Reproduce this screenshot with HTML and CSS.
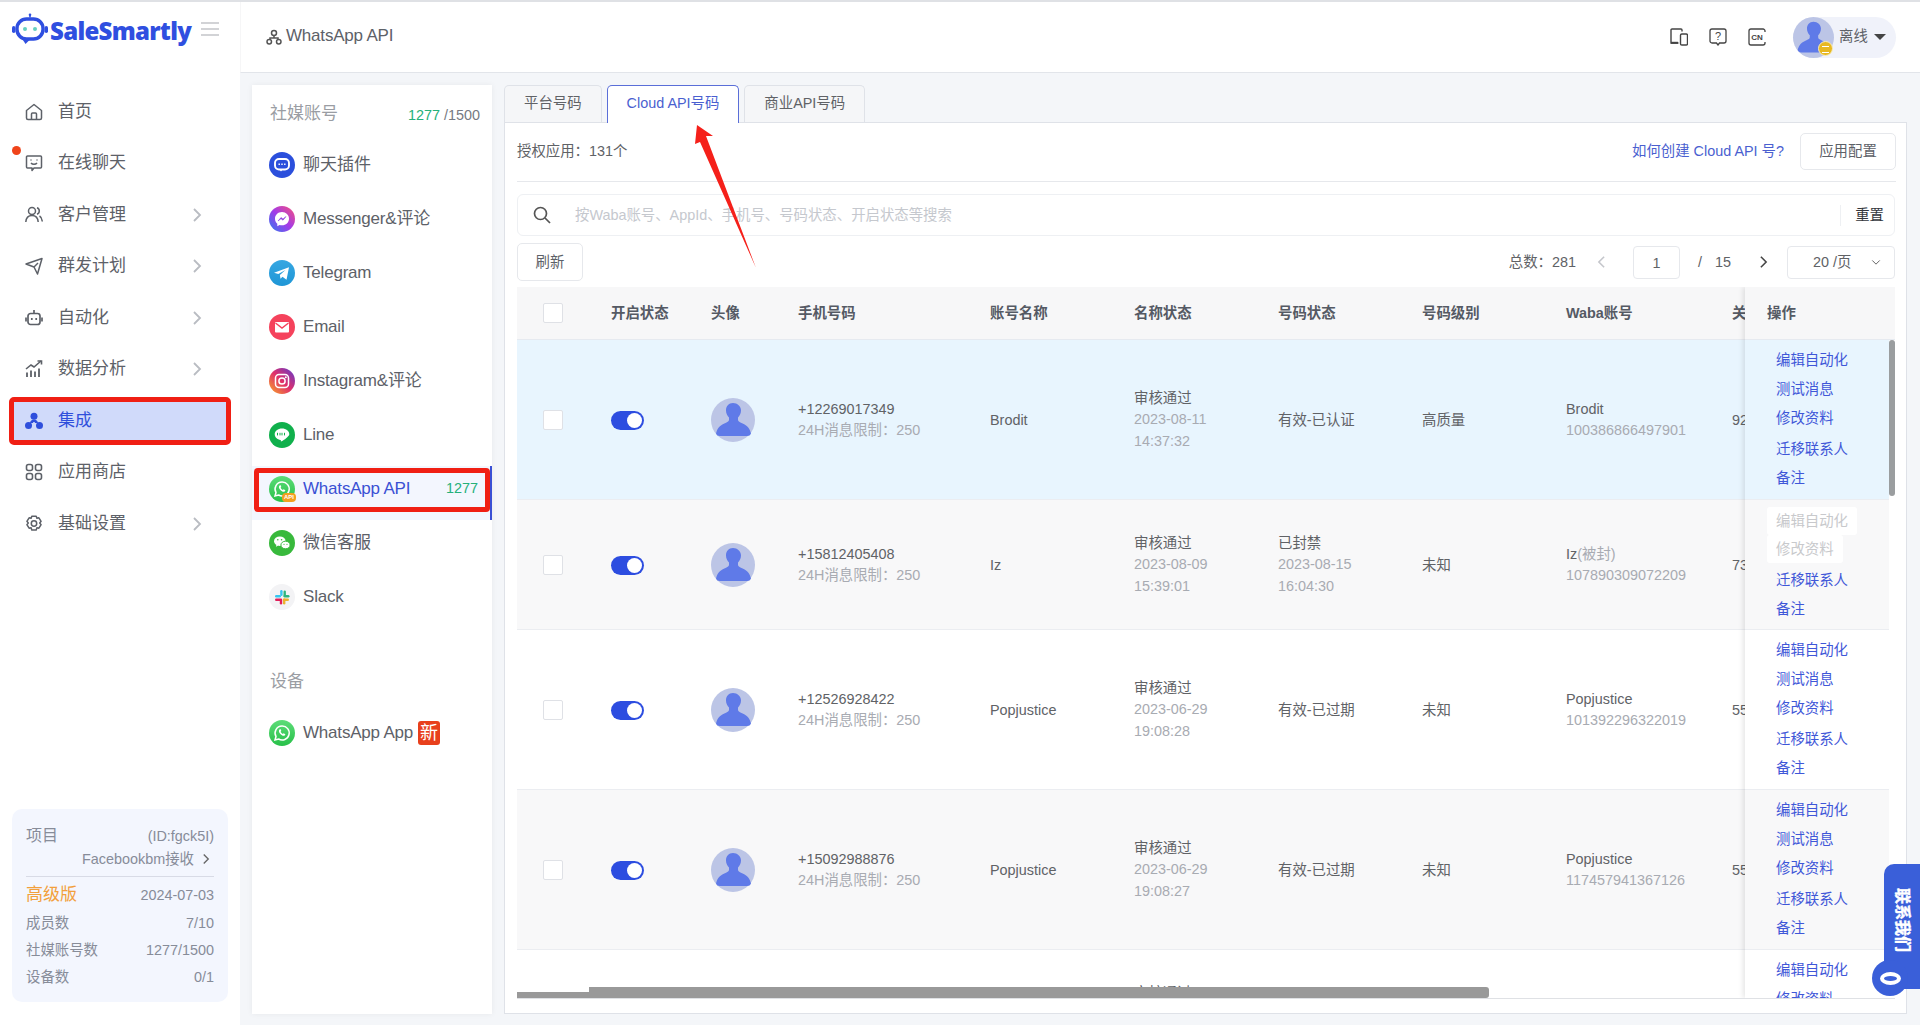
FILE: index.html
```html
<!DOCTYPE html>
<html lang="zh-CN">
<head>
<meta charset="utf-8">
<title>SaleSmartly - WhatsApp API</title>
<link rel="stylesheet" href="styles.css">
</head>
<body>
<svg class="sprite" aria-hidden="true">
  <defs>
    <symbol id="user" viewBox="0 0 44 44">
      <circle cx="22" cy="22" r="22" fill="#bcc5e6"/>
      <path d="M22 5c-4.400 0-7 3.300-7 7.300 0 3 1.200 5.500 3 7.200v2.300c0 1.500-1.300 2.300-3.500 3.200C10 26.800 6.600 29 5 35.500c.6 1.700 2 2.500 3.800 2.500h27.400c1.800 0 3.200-.8 3.800-2.500-1.600-6.500-5-8.700-9.500-10.500-2.200-.9-3.500-1.700-3.500-3.200v-2.300c1.800-1.700 3-4.200 3-7.200C30 8.300 26.400 5 22 5z" fill="#5f7ae8"/>
    </symbol>
    <symbol id="chev" viewBox="0 0 10 16"><path d="M2 2l6 6-6 6" fill="none" stroke="currentColor" stroke-width="1.800"/></symbol>
    <symbol id="wa" viewBox="0 0 26 26">
      <circle cx="13" cy="13" r="13" fill="url(#waGrad)"/>
      <path d="M13 6a7 7 0 0 0-6 10.500L6 20l3.600-1A7 7 0 1 0 13 6z" fill="none" stroke="#fff" stroke-width="1.500"/>
      <path d="M10.500 9.500c-1 1-.7 2.800.9 4.500s3.400 2.300 4.500 1.200l.5-1-1.800-1-.8.700c-.8-.3-1.900-1.400-2.200-2.300l.7-.7-.8-1.900z" fill="#fff"/>
    </symbol>
    <linearGradient id="waGrad" x1="0" y1="0" x2="0" y2="1"><stop offset="0" stop-color="#5cdc78"/><stop offset="1" stop-color="#28c049"/></linearGradient>
    <linearGradient id="msGrad" x1="0" y1="1" x2="1" y2="0"><stop offset="0" stop-color="#2f7bf0"/><stop offset=".5" stop-color="#a33be8"/><stop offset="1" stop-color="#f9507a"/></linearGradient>
    <linearGradient id="igGrad" x1="0" y1="1" x2="1" y2="0"><stop offset="0" stop-color="#f9a825"/><stop offset=".5" stop-color="#e0306b"/><stop offset="1" stop-color="#5b3bd0"/></linearGradient>
    <linearGradient id="tgGrad" x1="0" y1="0" x2="0" y2="1"><stop offset="0" stop-color="#36a7e2"/><stop offset="1" stop-color="#1f96d6"/></linearGradient>
  </defs>
</svg>

<div class="app">
  <aside class="side">
    <div class="brand">
      <svg class="brand-mark" viewBox="0 0 36 32" fill="none">
        <path d="M18 1.500v3" stroke="#2f4fe0" stroke-width="1.600"/>
        <circle cx="18" cy="1.800" r="1.300" fill="#2f4fe0"/>
        <rect x="5" y="6" width="26" height="20" rx="9.500" stroke="#2f4fe0" stroke-width="3.400" fill="#fff"/>
        <path d="M10 25.500l3.500 5.500 4-4z" fill="#2f4fe0"/>
        <rect x="0" y="13" width="3.400" height="7" rx="1.700" fill="#2f4fe0"/>
        <rect x="32.600" y="13" width="3.400" height="7" rx="1.700" fill="#2f4fe0"/>
        <circle cx="13" cy="16" r="2" fill="#66d0c0"/>
        <circle cx="23" cy="16" r="2" fill="#66d0c0"/>
      </svg>
      <span class="brand-name">SaleSmartly</span>
      <span class="burger"><i></i><i></i><i></i></span>
    </div>
    <nav class="nav">
      <a class="nav-item">
        <svg class="nav-ic" viewBox="0 0 18 18" fill="none" stroke="currentColor" stroke-width="1.500"><path d="M1.500 7.500L9 1.500l7.500 6V15a1.500 1.500 0 0 1-1.500 1.500H3A1.500 1.500 0 0 1 1.500 15z" stroke-linejoin="round"/><path d="M6.500 16.500V11a1 1 0 0 1 1-1h3a1 1 0 0 1 1 1v5.500"/></svg>
        <span>首页</span>
      </a>
      <a class="nav-item">
        <i class="dot"></i>
        <svg class="nav-ic" viewBox="0 0 18 18" fill="none" stroke="currentColor" stroke-width="1.500"><path d="M2.500 2h13a1 1 0 0 1 1 1v10a1 1 0 0 1-1 1H9l-2 2.500V14H2.500a1 1 0 0 1-1-1V3a1 1 0 0 1 1-1z" stroke-linejoin="round"/><path d="M6 9c1.500 1.800 4.500 1.800 6 0"/><path d="M6 5.500v1M12 5.500v1"/></svg>
        <span>在线聊天</span>
      </a>
      <a class="nav-item">
        <svg class="nav-ic" viewBox="0 0 18 18" fill="none" stroke="currentColor" stroke-width="1.500"><circle cx="7" cy="5" r="3.500"/><path d="M.8 16c.3-4 2.800-6.500 6.200-6.500s5.900 2.500 6.200 6.500"/><path d="M12 1.800c1.500.5 2.300 1.700 2.300 3.200s-.8 2.700-2.300 3.200M14.500 10c1.700 1 2.600 3 2.800 5.500"/></svg>
        <span>客户管理</span>
        <svg class="chev"><use href="#chev"/></svg>
      </a>
      <a class="nav-item">
        <svg class="nav-ic" viewBox="0 0 18 18" fill="none" stroke="currentColor" stroke-width="1.500" stroke-linejoin="round"><path d="M1 7l16-5.500L12.500 17 9 10z"/><path d="M9 10l4-4"/></svg>
        <span>群发计划</span>
        <svg class="chev"><use href="#chev"/></svg>
      </a>
      <a class="nav-item">
        <svg class="nav-ic" viewBox="0 0 18 18" fill="none" stroke="currentColor" stroke-width="1.700"><rect x="3" y="4.500" width="12" height="11" rx="2.500"/><path d="M9 1v3.500M1 8.500v4M17 8.500v4"/><path d="M6.800 9v2M11.200 9v2"/></svg>
        <span>自动化</span>
        <svg class="chev"><use href="#chev"/></svg>
      </a>
      <a class="nav-item">
        <svg class="nav-ic" viewBox="0 0 18 18" fill="none" stroke="currentColor" stroke-width="1.600"><path d="M1 9l5-4 3 2 7-6"/><path d="M12.500 1H16.500V4.500"/><path d="M2 12.500V17M6 10.500V17M10 11.500V17M14 8.500V17" stroke-width="1.800"/></svg>
        <span>数据分析</span>
        <svg class="chev"><use href="#chev"/></svg>
      </a>
      <a class="nav-item active">
        <svg class="nav-ic" viewBox="0 0 18 18" fill="currentColor"><circle cx="9" cy="4.200" r="3.500"/><circle cx="3.500" cy="13.500" r="3.500"/><circle cx="14.500" cy="13.500" r="3.500"/><path d="M5 11c.3-2 1.800-3.500 4-3.500s3.700 1.500 4 3.500H9.800v-1H8.200v1z"/></svg>
        <span>集成</span>
      </a>
      <a class="nav-item">
        <svg class="nav-ic" viewBox="0 0 18 18" fill="none" stroke="currentColor" stroke-width="1.600"><rect x="1.500" y="1.500" width="6" height="6" rx="2"/><rect x="10.500" y="1.500" width="6" height="6" rx="2"/><rect x="1.500" y="10.500" width="6" height="6" rx="2"/><rect x="10.500" y="10.500" width="6" height="6" rx="2"/></svg>
        <span>应用商店</span>
      </a>
      <a class="nav-item">
        <svg class="nav-ic" viewBox="0 0 18 18" fill="none" stroke="currentColor" stroke-width="1.500" stroke-linejoin="round"><path d="M6.800 1.300h4.400l.7 2 2-.5 2.200 3.500-1.400 1.700 1.400 1.700-2.200 3.500-2-.4-.7 2.100H6.800l-.7-2.100-2 .4L1.900 9.700l1.400-1.700-1.400-1.700 2.200-3.500 2 .5z"/><circle cx="9" cy="8.500" r="2.700"/></svg>
        <span>基础设置</span>
        <svg class="chev"><use href="#chev"/></svg>
      </a>
    </nav>
    <section class="plan">
      <div class="plan-row"><span class="plan-project">项目</span><span>(ID:fgck5I)</span></div>
      <div class="plan-team">Facebookbm接收<svg class="plan-chev"><use href="#chev"/></svg></div>
      <hr class="plan-rule">
      <div class="plan-row plan-tier"><span class="plan-level">高级版</span><span>2024-07-03</span></div>
      <div class="plan-row plan-stat"><span>成员数</span><span>7/10</span></div>
      <div class="plan-row plan-stat"><span>社媒账号数</span><span>1277/1500</span></div>
      <div class="plan-row plan-stat"><span>设备数</span><span>0/1</span></div>
    </section>
  </aside>

  <div class="right">
    <header class="topbar">
      <svg class="crumb-ic" viewBox="0 0 16 16" fill="none" stroke="#555" stroke-width="1.500"><circle cx="8" cy="4" r="2.500"/><rect x="1" y="10.500" width="4.500" height="4.500" rx="2.200"/><rect x="10.500" y="10.500" width="4.500" height="4.500" rx="2.200"/><path d="M4 10.500V9h8v1.500M8 6.500V9"/></svg>
      <span class="crumb lat">WhatsApp API</span>
      <div class="top-tools">
        <svg class="tool" viewBox="0 0 18 18" fill="none" stroke="#444" stroke-width="1.400"><path d="M12 3.500V2a1 1 0 0 0-1-1H2a1 1 0 0 0-1 1v13h7.500"/><rect x="10.500" y="6" width="7" height="11" rx="1.300"/><path d="M1 14.800h7" stroke-width="2"/></svg>
        <svg class="tool" viewBox="0 0 18 18" fill="none" stroke="#444" stroke-width="1.300"><path d="M3 1h12a2 2 0 0 1 2 2v10a2 2 0 0 1-2 2h-4.500L9 17l-1.500-2H3a2 2 0 0 1-2-2V3a2 2 0 0 1 2-2z"/><text x="9" y="12" text-anchor="middle" class="tool-q">?</text></svg>
        <svg class="tool" viewBox="0 0 18 18" fill="none" stroke="#444" stroke-width="1.300"><path d="M17 4V3a2 2 0 0 0-2-2H3a2 2 0 0 0-2 2v12a2 2 0 0 0 2 2h12a2 2 0 0 0 2-2v-1"/><text x="9" y="12" text-anchor="middle" class="tool-cn">CN</text></svg>
        <div class="status">
          <span class="status-face">
            <svg class="status-ava"><use href="#user"/></svg>
            <i class="status-badge"></i>
          </span>
          <span class="status-text">离线</span>
          <i class="caret"></i>
        </div>
      </div>
    </header>

    <div class="content">
      <aside class="social">
        <div class="soc-head"><span>社媒账号</span><span class="soc-count"><b>1277</b> /1500</span></div>
        <a class="soc-item">
          <svg class="soc-ic" viewBox="0 0 26 26"><circle cx="13" cy="13" r="13" fill="#2b4fdc"/><rect x="6" y="7" width="14" height="10.500" rx="4" fill="none" stroke="#fff" stroke-width="1.900"/><path d="M10 17l2 2.500L14 17z" fill="#fff"/><path d="M9.500 12.300h1.400M12.300 12.300h1.400M15.100 12.300h1.400" stroke="#fff" stroke-width="1.600"/></svg>
          <span>聊天插件</span>
        </a>
        <a class="soc-item">
          <svg class="soc-ic" viewBox="0 0 26 26"><circle cx="13" cy="13" r="13" fill="url(#msGrad)"/><path d="M13 6c-4 0-7 2.900-7 6.700 0 2 .8 3.800 2.300 5v2.500l2.300-1.200c.8.200 1.600.3 2.400.3 4 0 7-2.900 7-6.600S17 6 13 6z" fill="#fff"/><path d="M9 15l3-3.500 2 1.500 3-2.500-3 3.700-2-1.500z" fill="#8a3ae0" stroke="#8a3ae0" stroke-width=".5"/></svg>
          <span class="lat">Messenger&amp;评论</span>
        </a>
        <a class="soc-item">
          <svg class="soc-ic" viewBox="0 0 26 26"><circle cx="13" cy="13" r="13" fill="url(#tgGrad)"/><path d="M5 12.800l15-5.600-2.500 12.500-4-3-2 2-.6-3.800 5.600-5-7.200 4.200z" fill="#fff"/></svg>
          <span class="lat">Telegram</span>
        </a>
        <a class="soc-item">
          <svg class="soc-ic" viewBox="0 0 26 26"><circle cx="13" cy="13" r="13" fill="#f5425c"/><rect x="6" y="8" width="14" height="10.500" rx="1" fill="#fff"/><path d="M6.500 9l6.500 5 6.500-5" fill="none" stroke="#f5425c" stroke-width="1.400"/></svg>
          <span class="lat">Email</span>
        </a>
        <a class="soc-item">
          <svg class="soc-ic" viewBox="0 0 26 26"><circle cx="13" cy="13" r="13" fill="url(#igGrad)"/><rect x="6.500" y="6.500" width="13" height="13" rx="3.500" fill="none" stroke="#fff" stroke-width="1.500"/><circle cx="13" cy="13" r="3.100" fill="none" stroke="#fff" stroke-width="1.500"/><circle cx="16.800" cy="9.200" r="1" fill="#fff"/></svg>
          <span class="lat">Instagram&amp;评论</span>
        </a>
        <a class="soc-item">
          <svg class="soc-ic" viewBox="0 0 26 26"><circle cx="13" cy="13" r="13" fill="#10b04c"/><path d="M13 6.500c-4.100 0-7.300 2.500-7.300 5.800 0 2.900 2.500 5.200 5.900 5.700.4.100.3 1.500.3 1.500s3.700-1.700 6.100-4.100c1.400-1.300 2.300-2 2.300-3.100 0-3.300-3.200-5.800-7.300-5.800z" fill="#fff"/><path d="M8.500 10.800v2.600M11 10.800v2.600M13 10.800v2.600M15.500 10.800v2.600" stroke="#10b04c" stroke-width="1"/></svg>
          <span class="lat">Line</span>
        </a>
        <a class="soc-item soc-active">
          <span class="soc-wrap">
            <svg class="soc-ic"><use href="#wa"/></svg>
            <i class="api-tag">API</i>
          </span>
          <span class="lat">WhatsApp API</span>
          <b class="soc-num">1277</b>
          <i class="red-box"></i>
        </a>
        <a class="soc-item">
          <svg class="soc-ic" viewBox="0 0 26 26"><circle cx="13" cy="13" r="13" fill="#38b93c"/><ellipse cx="10.800" cy="11.200" rx="5.800" ry="4.800" fill="#fff"/><path d="M7.500 14.500l-.6 2.200 2.500-1.300z" fill="#fff"/><ellipse cx="16.500" cy="15" rx="4.600" ry="3.800" fill="#fff" stroke="#38b93c"/><circle cx="8.800" cy="9.800" r=".8" fill="#38b93c"/><circle cx="12.600" cy="9.800" r=".8" fill="#38b93c"/><circle cx="15" cy="14.300" r=".6" fill="#38b93c"/><circle cx="18" cy="14.300" r=".6" fill="#38b93c"/></svg>
          <span>微信客服</span>
        </a>
        <a class="soc-item">
          <svg class="soc-ic" viewBox="0 0 26 26"><circle cx="13" cy="13" r="13" fill="#f3f3f5"/><rect x="11.200" y="6" width="2.400" height="6" rx="1.200" fill="#36c5f0"/><rect x="6" y="11" width="6" height="2.400" rx="1.200" fill="#36c5f0"/><rect x="14.500" y="6.500" width="2.400" height="6" rx="1.200" fill="#2eb67d"/><rect x="14.500" y="11" width="6" height="2.400" rx="1.200" fill="#2eb67d"/><rect x="14" y="14.500" width="6" height="2.400" rx="1.200" fill="#ecb22e"/><rect x="14" y="14.500" width="2.400" height="6" rx="1.200" fill="#ecb22e"/><rect x="6" y="14.500" width="6" height="2.400" rx="1.200" fill="#e01e5a"/><rect x="10.800" y="14.500" width="2.400" height="6" rx="1.200" fill="#e01e5a"/></svg>
          <span class="lat">Slack</span>
        </a>
        <div class="soc-head soc-head-2"><span>设备</span></div>
        <a class="soc-item">
          <svg class="soc-ic"><use href="#wa"/></svg>
          <span class="lat">WhatsApp App</span>
          <i class="new-tag">新</i>
        </a>
      </aside>

      <main class="main">
        <div class="tabs">
          <a class="tab">平台号码</a>
          <a class="tab tab-on">Cloud API号码</a>
          <a class="tab">商业API号码</a>
        </div>
        <div class="panel">
          <div class="panel-top">
            <span>授权应用：131个</span>
            <a class="how">如何创建 Cloud API 号?</a>
            <button class="btn btn-cfg">应用配置</button>
          </div>
          <div class="search">
            <svg class="search-ic" viewBox="0 0 18 18" fill="none" stroke="#555" stroke-width="1.700"><circle cx="7.500" cy="7.500" r="6"/><path d="M12 12l5 5"/></svg>
            <span class="search-ph">按Waba账号、AppId、手机号、号码状态、开启状态等搜索</span>
            <span class="reset">重置</span>
          </div>
          <div class="toolbar">
            <button class="btn btn-ref">刷新</button>
            <div class="pager">
              <span>总数：281</span>
              <svg class="pg-prev"><use href="#chev"/></svg>
              <span class="pg-input">1</span>
              <span class="pg-sep">/</span>
              <span class="pg-total">15</span>
              <svg class="pg-next"><use href="#chev"/></svg>
              <span class="pg-size">20 /页<svg class="pg-down" viewBox="0 0 12 8"><path d="M1.500 1.500L6 6l4.500-4.500" fill="none" stroke="#666" stroke-width="1.200"/></svg></span>
            </div>
          </div>

          <div class="table">
            <div class="row head">
              <div class="c-check"><i class="check"></i></div>
              <div>开启状态</div><div>头像</div><div>手机号码</div><div>账号名称</div><div>名称状态</div><div>号码状态</div><div>号码级别</div><div>Waba账号</div><div>关联</div>
            </div>
            <div class="tbody">
              <div class="row r-tall r-sel">
                <div class="c-check"><i class="check"></i></div>
                <div><i class="switch"></i></div>
                <div><svg class="ava"><use href="#user"/></svg></div>
                <div><p>+12269017349</p><p class="sub">24H消息限制：250</p></div>
                <div>Brodit</div>
                <div><p>审核通过</p><p class="sub">2023-08-11</p><p class="sub">14:37:32</p></div>
                <div>有效-已认证</div>
                <div>高质量</div>
                <div><p>Brodit</p><p class="sub">100386866497901</p></div>
                <div>92</div>
              </div>
              <div class="row r-short r-alt">
                <div class="c-check"><i class="check"></i></div>
                <div><i class="switch"></i></div>
                <div><svg class="ava"><use href="#user"/></svg></div>
                <div><p>+15812405408</p><p class="sub">24H消息限制：250</p></div>
                <div>Iz</div>
                <div><p>审核通过</p><p class="sub">2023-08-09</p><p class="sub">15:39:01</p></div>
                <div><p>已封禁</p><p class="sub">2023-08-15</p><p class="sub">16:04:30</p></div>
                <div>未知</div>
                <div><p>Iz<span class="sub">(被封)</span></p><p class="sub">107890309072209</p></div>
                <div>73</div>
              </div>
              <div class="row r-tall">
                <div class="c-check"><i class="check"></i></div>
                <div><i class="switch"></i></div>
                <div><svg class="ava"><use href="#user"/></svg></div>
                <div><p>+12526928422</p><p class="sub">24H消息限制：250</p></div>
                <div>Popjustice</div>
                <div><p>审核通过</p><p class="sub">2023-06-29</p><p class="sub">19:08:28</p></div>
                <div>有效-已过期</div>
                <div>未知</div>
                <div><p>Popjustice</p><p class="sub">101392296322019</p></div>
                <div>55</div>
              </div>
              <div class="row r-tall r-alt">
                <div class="c-check"><i class="check"></i></div>
                <div><i class="switch"></i></div>
                <div><svg class="ava"><use href="#user"/></svg></div>
                <div><p>+15092988876</p><p class="sub">24H消息限制：250</p></div>
                <div>Popjustice</div>
                <div><p>审核通过</p><p class="sub">2023-06-29</p><p class="sub">19:08:27</p></div>
                <div>有效-已过期</div>
                <div>未知</div>
                <div><p>Popjustice</p><p class="sub">117457941367126</p></div>
                <div>55</div>
              </div>
              <div class="row r-short">
                <div></div><div></div><div></div><div></div><div></div>
                <div><p>审核通过</p><p class="sub">2023-06-29</p><p class="sub">19:08:26</p></div>
              </div>
            </div>

            <div class="fixed">
              <div class="fixed-head">操作</div>
              <div class="fixed-body">
                <div class="ops r-tall r-sel"><a>编辑自动化</a><a>测试消息</a><a>修改资料</a><a class="op-gap">迁移联系人</a><a>备注</a></div>
                <div class="ops r-short r-alt"><a class="op-off">编辑自动化</a><a class="op-off">修改资料</a><a class="op-gap">迁移联系人</a><a>备注</a></div>
                <div class="ops r-tall"><a>编辑自动化</a><a>测试消息</a><a>修改资料</a><a class="op-gap">迁移联系人</a><a>备注</a></div>
                <div class="ops r-tall r-alt"><a>编辑自动化</a><a>测试消息</a><a>修改资料</a><a class="op-gap">迁移联系人</a><a>备注</a></div>
                <div class="ops r-tall"><a>编辑自动化</a><a>修改资料</a><a class="op-gap">迁移联系人</a><a>备注</a><a>测试消息</a></div>
              </div>
              <i class="vbar"></i>
            </div>
            <i class="htrack"></i>
            <i class="hthumb"></i>
          </div>
        </div>
      </main>
    </div>
  </div>
</div>

<svg class="arrow" viewBox="0 0 70 150"><polygon points="7,1 23,12 16,12 66,144 10,18 5,20" fill="#f5201a"/></svg>
<div class="contact">
  <span class="contact-text">联系我们</span>
  <span class="contact-bubble"><i></i></span>
</div>
</body>
</html>
```
FILE: styles.css
```css
* { box-sizing: border-box; }
html, body { margin: 0; height: 100%; }
body {
  position: relative;
  height: 1025px;
  overflow: hidden;
  background: #f4f6f9;
  color: #606266;
  font: 14.400px/1.400 "Liberation Sans", "Noto Sans CJK SC", sans-serif;
}
p { margin: 0; }
i { font-style: normal; }
.sprite { position: absolute; width: 0; height: 0; }
.lat { letter-spacing: -.2px; }

.app { display: flex; height: 1025px; border-top: 2px solid #dfe1e5; }

/* left navigation */
.side { width: 240px; flex: none; display: flex; flex-direction: column; background: #fff; }
.brand { display: flex; align-items: center; height: 58px; padding: 0 0 4px 12px; }
.brand-mark { width: 36px; height: 32px; flex: none; }
.brand-name { margin: 4px 0 0 2px; font: 800 24px/1 "Open Sans", sans-serif; letter-spacing: -.7px; color: #2f4fe0; }
.burger { display: flex; flex-direction: column; gap: 3.500px; margin: 0 0 0 10px; }
.burger i { display: block; width: 18px; height: 2.500px; background: #d2d3d6; }
.nav { display: flex; flex-direction: column; margin-top: 26px; }
.nav-item {
  position: relative;
  display: flex;
  align-items: center;
  height: 47.500px;
  margin: 2px 9px;
  padding: 0 29px 0 16px;
  font-size: 17px;
  color: #5d6168;
}
.nav-ic { width: 18px; height: 18px; margin-right: 15px; flex: none; }
.chev { width: 10px; height: 16px; margin-left: auto; color: #b9bcc2; }
.dot { position: absolute; left: 3px; top: 6px; width: 9px; height: 9px; border-radius: 50%; background: #f0441a; }
.active { border: 5px solid #f01f14; border-radius: 5px; padding-left: 11px; background: #d0dafa; color: #2f4fdc; }

.plan { margin: auto 12px 23px; height: 193px; padding: 16px 14px 0; background: #f3f6fe; border-radius: 10px; color: #878c99; }
.plan-row { display: flex; justify-content: space-between; align-items: center; }
.plan-project { font-size: 16px; }
.plan-team { display: flex; align-items: center; justify-content: flex-end; height: 24px; padding-right: 4px; }
.plan-chev { width: 8px; height: 12px; margin-left: 8px; color: #666; }
.plan-rule { height: 1px; margin: 5px 0 0; border: 0; background: #d8dbe6; }
.plan-tier { height: 28px; margin-top: 4px; }
.plan-level { font-size: 17px; color: #f2a03c; }
.plan-stat { height: 27px; }

/* right area */
.right { flex: 1; min-width: 0; display: flex; flex-direction: column; }
.topbar { display: flex; align-items: center; height: 71px; padding: 0 24px 0 25px; background: #fff; border-bottom: 1px solid #e2e5ea; border-left: 1px solid #f6f6f7; }
.crumb-ic { width: 16px; height: 16px; margin-right: 4px; }
.crumb { margin-bottom: 2px; font-size: 17px; color: #5d6168; }
.top-tools { display: flex; align-items: center; margin-left: auto; }
.tool { width: 18px; height: 18px; margin-right: 21px; }
.tool-q { font: 11px "Liberation Sans", sans-serif; fill: #444; stroke: none; }
.tool-cn { font: bold 8px "Liberation Sans", sans-serif; fill: #444; stroke: none; }
.status { display: flex; align-items: center; width: 103px; height: 41px; margin-left: 6px; background: #f0f2fa; border-radius: 21px; color: #5d6168; }
.status-face { position: relative; width: 41px; height: 41px; margin-right: 5px; flex: none; }
.status-ava { width: 41px; height: 41px; display: block; }
.status-badge { position: absolute; right: 1px; bottom: 2px; width: 15px; height: 15px; border-radius: 50%; background: #e8b820; border: 1px solid #f5ecc0; }
.status-badge::after { content: ""; position: absolute; left: 3px; top: 4px; width: 7px; height: 5px; border-top: 1.500px solid #fff; border-bottom: 1.500px solid #fff; }
.status-text { margin-bottom: 2px; }
.caret { margin-left: 6px; border: 6px solid transparent; border-top: 6px solid #444; border-bottom: 0; }

.content { flex: 1; min-height: 0; display: flex; gap: 12px; padding: 12px 13px 11px 12px; }

/* social list */
.social { width: 240px; flex: none; background: #fff; box-shadow: 0 0 6px rgba(0, 0, 0, .06); }
.soc-head { display: flex; justify-content: space-between; height: 57px; padding: 17px 12px 0 18px; font-size: 17px; color: #9a9da3; }
.soc-head-2 { margin-top: 25px; }
.soc-count { padding-top: 3px; font-size: 14.400px; color: #767a82; }
.soc-count b, .soc-num { font-weight: 400; color: #25b07a; }
.soc-item { position: relative; display: flex; align-items: center; height: 54px; padding: 0 14px 9px 17px; font-size: 17px; color: #5d6168; }
.soc-ic { width: 26px; height: 26px; flex: none; display: block; margin-right: 8px; }
.soc-wrap { position: relative; display: block; }
.api-tag { position: absolute; left: 13px; top: 17px; width: 14px; height: 9px; border-radius: 4px; background: #f3a01f; color: #fff; font: bold 6px/9px "Liberation Sans", sans-serif; text-align: center; }
.soc-active { background: #f3f6fe; color: #3a50d4; box-shadow: inset -2px 0 0 #3a50d4; }
.soc-num { margin-left: auto; font-size: 14.400px; }
.red-box { position: absolute; left: 2px; right: 2px; top: 2px; height: 44px; border: 5px solid #f01f14; border-radius: 4px; }
.new-tag { width: 22px; height: 24px; margin-left: 5px; background: #e8401c; border-radius: 3px; color: #fff; font-size: 18px; line-height: 24px; text-align: center; }

/* main */
.main { flex: 1; min-width: 0; display: flex; flex-direction: column; }
.tabs { display: flex; gap: 5px; height: 37px; }
.tab { display: flex; align-items: center; justify-content: center; height: 38px; padding: 0 19px 3px; background: #f5f6f8; border: 1px solid #dfe2e8; border-bottom: 0; border-radius: 5px 5px 0 0; color: #606266; }
.tab-on { position: relative; z-index: 1; background: #fff; border-color: #5a6ed8; color: #4a5fd0; }
.panel { flex: 1; min-height: 0; padding: 11px 11px 14px 12px; background: #fff; border: 1px solid #dfe2e8; }
.panel-top { display: flex; align-items: center; height: 48px; padding-bottom: 13px; border-bottom: 1px solid #e6e8ec; margin-right: -1px; }
.how { margin-left: auto; margin-right: 16px; color: #4a5fd0; }
.btn { height: 37px; padding: 0; background: #fff; border: 1px solid #e6e8ec; border-radius: 5px; color: #5d6168; font: inherit; }
.btn-cfg { width: 96px; flex: none; }
.btn-ref { width: 66px; height: 38px; }

.search { display: flex; align-items: center; height: 42px; margin-top: 12px; padding: 0 10px 0 15px; border: 1px solid #eef0f3; border-radius: 6px; }
.search-ic { width: 18px; height: 18px; margin-right: 24px; }
.search-ph { color: #c5c8ce; }
.reset { margin-left: auto; padding-left: 14px; border-left: 1px solid #eef0f3; color: #33363c; line-height: 21px; }

.toolbar { display: flex; align-items: center; justify-content: space-between; height: 38px; margin-top: 7px; }
.pager { display: flex; align-items: center; }
.pg-prev { width: 9px; height: 14px; margin-left: 21px; transform: scaleX(-1); color: #c4c6cb; }
.pg-input { width: 47px; height: 33px; margin-left: 27px; border: 1px solid #e6e8ec; border-radius: 4px; text-align: center; line-height: 33px; }
.pg-sep { margin-left: 18px; }
.pg-total { margin-left: 13px; }
.pg-next { width: 9px; height: 14px; margin-left: 28px; color: #444; }
.pg-size { position: relative; width: 108px; height: 33px; margin-left: 19px; padding-left: 25px; border: 1px solid #e6e8ec; border-radius: 4px; line-height: 31px; }
.pg-down { position: absolute; right: 13px; top: 12px; width: 10px; height: 7px; }

/* table */
.table { position: relative; height: 712px; margin-top: 6px; overflow: hidden; border-bottom: 1px solid #dfe1e5; }
.row { display: grid; grid-template-columns: 94px 100px 87px 192px 144px 144px 144px 144px 166px 1fr; align-items: center; padding-top: 1px; }
.head { height: 53px; background: #f7f7f8; border-bottom: 1px solid #e6eaf0; font-weight: 700; color: #555a64; }
.tbody { margin-right: 6px; }
.r-tall { height: 160px; border-bottom: 1px solid #ebedf1; }
.r-short { height: 130px; border-bottom: 1px solid #ebedf1; }
.r-sel { background: #e8f5fe; }
.r-alt { background: #f8f8f9; }
.row p { line-height: 21.500px; }
.sub { color: #a8abb2; }
.c-check { padding-left: 26px; margin-top: -1px; }
.check { display: block; width: 20px; height: 20px; background: #fff; border: 1px solid #dfe1e6; border-radius: 2px; }
.switch { position: relative; display: block; width: 33px; height: 19px; border-radius: 10px; background: #2d4de0; }
.switch::after { content: ""; position: absolute; right: 2px; top: 2px; width: 15px; height: 15px; border-radius: 50%; background: #fff; }
.ava { display: block; width: 44px; height: 44px; }

.fixed { position: absolute; top: 0; right: 0; bottom: 0; width: 150px; background: #fff; box-shadow: -2px 0 5px rgba(0, 0, 0, .1); }
.fixed-head { height: 53px; padding-left: 22px; background: #f7f7f8; border-bottom: 1px solid #e6eaf0; font-weight: 700; line-height: 52px; color: #555a64; }
.fixed-body { margin-right: 6px; }
.ops { display: flex; flex-direction: column; align-items: flex-start; justify-content: center; padding-left: 22px; color: #3f57d8; }
.ops.r-short { padding-top: 2px; }
.ops a { height: 29px; padding: 0 9px; line-height: 29px; }
.ops .op-gap { margin-top: 2px; }
.ops.r-short .op-gap { margin-top: 3px; }
.ops .op-off { height: 28px; background: #fff; border-radius: 3px; color: #c8c9cc; line-height: 28px; }
.vbar { position: absolute; right: 0; top: 53px; width: 6px; height: 156px; border-radius: 3px; background: #9a9d9f; }
.htrack { position: absolute; left: 0; bottom: 0; width: 72px; height: 6px; background: #999; }
.hthumb { position: absolute; left: 72px; bottom: 0; width: 900px; height: 11px; border-radius: 0 3px 3px 0; background: #999; }

/* overlays */
.arrow { position: absolute; left: 690px; top: 124px; width: 70px; height: 150px; }
.contact { position: absolute; left: 1884px; top: 864px; width: 36px; height: 125px; background: #3a5fd9; border-radius: 10px 0 0 0; }
.contact-text { position: absolute; left: 7px; top: 24px; writing-mode: vertical-rl; text-orientation: sideways; color: #fff; font-size: 16px; font-weight: 700; line-height: 22px; -webkit-text-stroke: .4px #fff; }
.contact-bubble { position: absolute; left: -12px; top: 96px; display: flex; align-items: center; justify-content: center; width: 36px; height: 36px; border-radius: 50%; background: #3a5fd9; }
.contact-bubble i { flex: none; width: 21px; height: 13px; border: 4px solid #fff; border-radius: 50%; }
```
